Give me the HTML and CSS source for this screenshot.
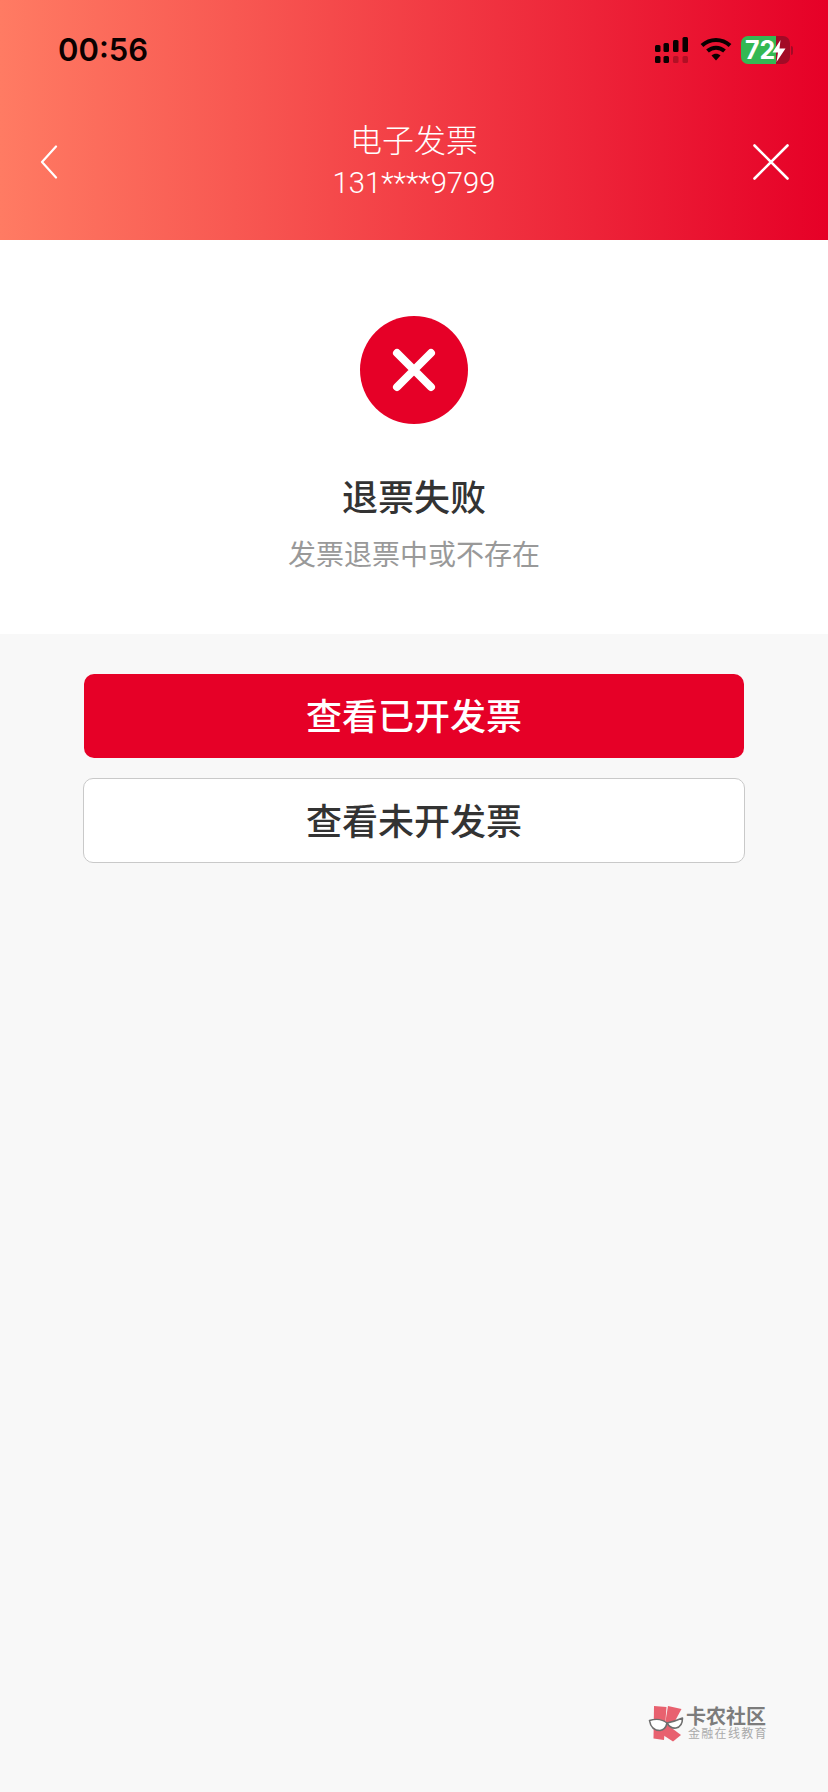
FILE: index.html
```html
<!DOCTYPE html>
<html lang="zh-CN">
<head>
<meta charset="utf-8">
<title>电子发票</title>
<link rel="stylesheet" href="styles.css">
</head>
<body>
<div class="page">
  <header class="header">
    <div class="status">
      <span class="time">00:56</span>
      <div class="status-icons">
        <svg class="signal" width="33" height="26" viewBox="0 0 33 26">
          <g fill="#0a0000">
            <rect x="0" y="8" width="5.500" height="7" rx="1.500"/>
            <rect x="8.500" y="6" width="5.500" height="9" rx="1.500"/>
            <rect x="18" y="3" width="5.500" height="12" rx="1.500"/>
            <rect x="27.500" y="0" width="5.500" height="15" rx="1.500"/>
            <rect x="0" y="19" width="5.500" height="7" rx="1.500"/>
            <rect x="8.500" y="19" width="5.500" height="7" rx="1.500"/>
          </g>
          <g fill="#0a0000" opacity=".25">
            <rect x="18" y="19" width="5.500" height="7" rx="1.500"/>
            <rect x="27.500" y="19" width="5.500" height="7" rx="1.500"/>
          </g>
        </svg>
        <svg class="wifi" width="32" height="24" viewBox="0 0 32 24">
          <g fill="none" stroke="#0a0000" stroke-width="4">
            <path d="M2 8.500C10 1 22 1 30 8.500"/>
            <path d="M7.500 14C12.500 9.500 19.500 9.500 24.500 14"/>
          </g>
          <path d="M11.500 18.500C14 16.300 18 16.300 20.500 18.500L16 23.500Z" fill="#0a0000"/>
        </svg>
        <div class="battery">
          <span class="battery-num">72</span>
          <svg class="bolt" width="14" height="22" viewBox="0 0 14 22"><path d="M8.500 0L0.500 12.500H6L4.500 22L13.500 8.500H7.500Z" fill="#fff"/></svg>
        </div>
        <span class="battery-nub"></span>
      </div>
    </div>
    <nav class="nav">
      <svg class="nav-back" width="19" height="34" viewBox="0 0 19 34"><path d="M17 1.500L3 17L17 32.500" fill="none" stroke="#fff" stroke-width="2.200" stroke-linecap="round" stroke-linejoin="round"/></svg>
      <div class="nav-title">
        <div class="nav-name">电子发票</div>
        <div class="nav-phone">131****9799</div>
      </div>
      <svg class="nav-close" width="36" height="36" viewBox="0 0 36 36"><path d="M1.500 1.500L34.500 34.500M34.500 1.500L1.500 34.500" fill="none" stroke="#fff" stroke-width="2.600" stroke-linecap="round"/></svg>
    </nav>
  </header>

  <section class="result">
    <svg class="result-icon" width="108" height="108" viewBox="0 0 108 108">
      <circle cx="54" cy="54" r="54" fill="#e60027"/>
      <path d="M37 37L71 71M71 37L37 71" fill="none" stroke="#fff" stroke-width="8" stroke-linecap="round"/>
    </svg>
    <h1 class="result-title">退票失败</h1>
    <p class="result-desc">发票退票中或不存在</p>
  </section>

  <section class="actions">
    <button class="btn btn-primary">查看已开发票</button>
    <button class="btn btn-outline">查看未开发票</button>
  </section>

  <div class="watermark">
    <svg class="wm-logo" width="41" height="45" viewBox="0 0 41 45">
      <g fill="#e8616f">
        <path d="M9 6L21.500 7L19 40L8.500 38.500Z"/>
        <path d="M23 6L36.500 9L30 21L20 24Z"/>
        <path d="M20 23L36 35L28 41.500L18 35Z"/>
      </g>
      <path d="M4.500 20.500C11 18.500 18 19.500 22 23C21 27.500 19 30 15 30.500C9.500 30.500 5.500 27 4.500 20.500Z" fill="#fff" stroke="#6e6e6e" stroke-width="1.600" stroke-linejoin="round"/>
      <path d="M22 23C27 22 33 20 37.500 18C37.500 23 35.500 27 31 28C27 28.500 24 26.500 22 23Z" fill="#fff" stroke="#6e6e6e" stroke-width="1.600" stroke-linejoin="round"/>
    </svg>
    <div class="wm-text">
      <div class="wm-name">卡农社区</div>
      <div class="wm-sub">金融在线教育</div>
    </div>
  </div>
</div>
</body>
</html>
```
FILE: styles.css
```css
* { box-sizing: border-box; }
html, body { margin: 0; padding: 0; }
body { font-family: "Noto Sans CJK SC", "Liberation Sans", sans-serif; background: #f8f8f8; }
.page { position: relative; width: 828px; height: 1792px; background: #f8f8f8; overflow: hidden; }

.header { height: 240px; background: linear-gradient(90deg, #ff7b63 0%, #e60027 100%); display: flex; flex-direction: column; }
.status { height: 96px; padding: 36px 35px 0 58px; display: flex; justify-content: space-between; align-items: flex-start; }
.time { font-family: Inter, "Liberation Sans", sans-serif; font-weight: 600; font-size: 31px; line-height: 28px; color: #0a0000; }
.status-icons { display: flex; align-items: flex-start; }
.signal { margin-top: 1px; }
.wifi { margin: 1px 0 0 12px; }
.battery { position: relative; width: 49px; height: 28px; margin-left: 9px; border-radius: 7px; background: linear-gradient(90deg, #34b853 0 35px, #a20a26 35px 49px); }
.battery-num { position: absolute; left: 4px; top: 0; font-family: Inter, "Liberation Sans", sans-serif; font-weight: 700; font-size: 25px; line-height: 28px; color: #fff; }
.bolt { position: absolute; left: 31px; top: 4px; }
.battery-nub { width: 2px; height: 9px; margin: 10px 0 0 1px; background: #a20a26; border-radius: 0 3px 3px 0; }

.nav { flex: 1; display: grid; grid-template-columns: 1fr auto 1fr; align-items: start; padding: 0 39px; }
.nav-back { margin-top: 49px; }
.nav-close { margin-top: 48px; justify-self: end; }
.nav-title { display: flex; flex-direction: column; align-items: center; color: #fff; margin-top: 22px; }
.nav-name { font-size: 32px; line-height: 40px; font-weight: 300; }
.nav-phone { font-family: Roboto, "Liberation Sans", sans-serif; font-size: 29.200px; line-height: 36px; margin-top: 7px; font-weight: 300; }

.result { height: 394px; background: #fff; display: flex; flex-direction: column; align-items: center; padding-top: 76px; }
.result-icon { display: block; }
.result-title { margin: 47px 0 0; font-size: 36px; line-height: 48px; font-weight: 500; color: #333; }
.result-desc { margin: 14px 0 0; font-size: 28px; line-height: 40px; font-weight: 400; color: #999; }

.actions { display: flex; flex-direction: column; align-items: center; padding-top: 40px; gap: 20px; }
.btn { display: block; font-family: inherit; font-size: 36px; font-weight: 500; border-radius: 10px; padding: 0 0 4px; }
.btn-primary { width: 660px; height: 84px; border: 0; background: #e60027; color: #fff; }
.btn-outline { width: 662px; height: 85px; border: 1px solid #c9c9c9; background: #fff; color: #333; }

.watermark { position: absolute; left: 645px; top: 1700px; display: flex; align-items: flex-start; }
.wm-text { display: flex; flex-direction: column; padding-top: 6px; }
.wm-name { font-size: 20px; line-height: 20px; font-weight: 700; color: #7c7c7c; }
.wm-sub { font-size: 12px; line-height: 14px; letter-spacing: 1.300px; padding-left: 2px; color: #aaa; white-space: nowrap; }
```
